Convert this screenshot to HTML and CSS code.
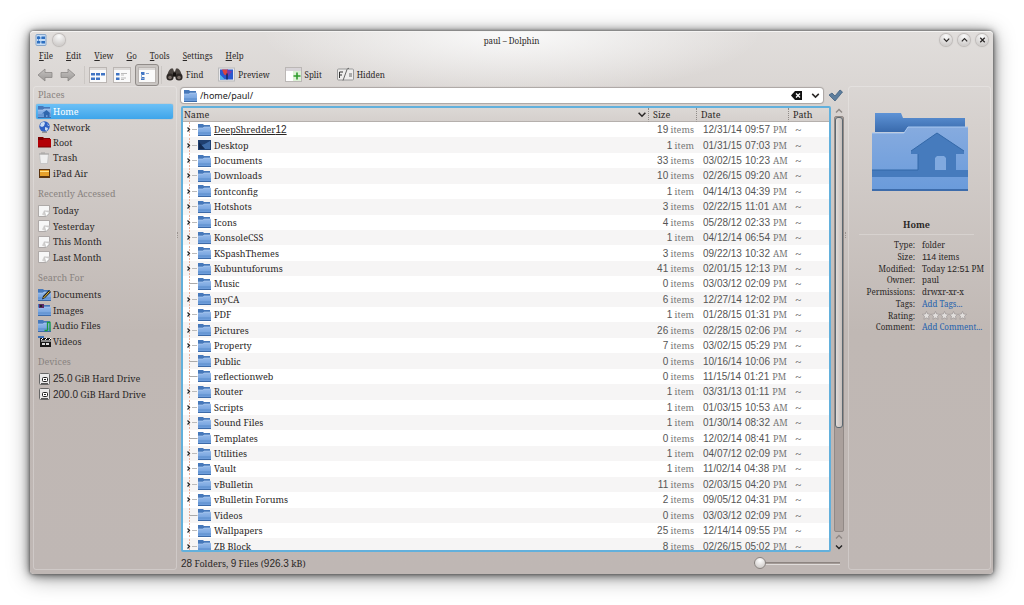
FILE: index.html
```html
<!DOCTYPE html>
<html lang="en">
<head>
<meta charset="utf-8">
<title>paul – Dolphin</title>
<link rel="stylesheet" href="styles.css">
</head>
<body>
<svg class="defs" aria-hidden="true">
  <defs>
    <linearGradient id="blue" x1="0" y1="0" x2="0" y2="1"><stop offset="0" stop-color="#94b9ea"/><stop offset="1" stop-color="#6c9cda"/></linearGradient>
    <linearGradient id="big" x1="0" y1="0" x2="0" y2="1"><stop offset="0" stop-color="#86abdf"/><stop offset="1" stop-color="#6a9bdb"/></linearGradient>
    <linearGradient id="dark" x1="0" y1="0" x2="0" y2="1"><stop offset="0" stop-color="#5e93d6"/><stop offset="1" stop-color="#396aac"/></linearGradient>
    <linearGradient id="grey" x1="0" y1="0" x2="0" y2="1"><stop offset="0" stop-color="#c5c2c0"/><stop offset="1" stop-color="#9b9896"/></linearGradient>
    <symbol id="folder" viewBox="0 0 13 12"><path d="M0 0h5l1 1h6v4H0z" fill="#4678ba"/><path d="M0 4h5l1-1h7v8H0z" fill="url(#blue)"/><path d="M0 11.500h13" stroke="#3c6aa8"/><path d="M0 9h13" stroke="#5b8ccb"/><path d="M0 4h5l1-1h7" fill="none" stroke="#b5d0f2" stroke-width=".6"/></symbol>
    <symbol id="desktop" viewBox="0 0 13 12"><path d="M0 1h13v10H0z" fill="#1f3f70"/><path d="M1 7Q6 6 12 2v8H1z" fill="#3f6ca8"/><path d="M1 3l6 7H1z" fill="#132a50"/></symbol>
    <symbol id="homef" viewBox="0 0 13 12"><use href="#folder"/><path d="M4 7.500L8.500 4l4 3.500h-1V11H9.500V9H8v2H6V7.500z" fill="#2f66ad"/></symbol>
    <symbol id="globe" viewBox="0 0 13 12"><circle cx="6.500" cy="5.500" r="5.200" fill="#2f62c4"/><path d="M3 2q3-2 4 0l-1 3-2 1-2-1zM7 6l3 1-1 3-2-1zM9 2l2 3h-1z" fill="#c9dcf3"/><path d="M4 11.200h5" stroke="#777"/></symbol>
    <symbol id="red" viewBox="0 0 13 12"><path d="M0 1h5l1 1h6v3H0z" fill="#7c0000"/><path d="M0 4h5l1-1h7v8H0z" fill="#b30006"/><path d="M0 11h13" stroke="#700"/></symbol>
    <symbol id="trash" viewBox="0 0 13 12"><path d="M1.500 2h9l-1 9.500h-7z" fill="#efefef" stroke="#bbb" stroke-width=".7"/><path d="M1 2h10M3 1h4" stroke="#a5a3a2"/></symbol>
    <symbol id="ipad" viewBox="0 0 13 12"><rect x="1" y="2" width="11" height="9" fill="#5a3410"/><rect x="2" y="3" width="9" height="6" fill="#e7a02b"/><path d="M2 4.500h9" stroke="#ffe18a"/></symbol>
    <symbol id="page" viewBox="0 0 13 12"><path d="M.5.5h11V8l-3 3.500h-8z" fill="#f7f7f7" stroke="#a19c9a" stroke-width=".8"/><path d="M4 9.500l2-4h5.500V8l-3 3.500" fill="#d2d0cf"/><path d="M6.500 6l5 1.500-3.500 4z" fill="#fff" stroke="#aaa" stroke-width=".4"/></symbol>
    <symbol id="docs" viewBox="0 0 13 12"><use href="#folder"/><path d="M4 10.500l1-3.500 6-6 2 2-6 6z" fill="#222"/><path d="M5.500 9l6-6.500" stroke="#ffd23c"/></symbol>
    <symbol id="images" viewBox="0 0 13 12"><use href="#folder"/><path d="M1 0h5v4H1z" fill="#5b2c66"/><path d="M2 1h2v2H2z" fill="#222"/></symbol>
    <symbol id="audio" viewBox="0 0 13 12"><use href="#folder"/><path d="M6.500 10.500h3M9.500 10.500V2.500h2.500V11" fill="none" stroke="#1d9a3c" stroke-width="1.300"/></symbol>
    <symbol id="video" viewBox="0 0 13 12"><path d="M0 1h6v2H0z" fill="#3d70b3"/><path d="M2 3h11v9H2z" fill="#171717"/><path d="M3 5l2-2M7 5l2-2M11 5l2-2M3 6h10" stroke="#fff"/><path d="M4 8h3v2H4zM8 8h3v2H8z" fill="#dcdcdc"/></symbol>
    <symbol id="drive" viewBox="0 0 13 12"><rect x="1.500" y=".5" width="10" height="11" rx="1" fill="#e9e9e9" stroke="#666"/><path d="M3 10.500h7" stroke="#555"/><rect x="4.500" y="4.500" width="5" height="4" rx="1" fill="#fff" stroke="#222"/><path d="M6 6h2v1H6z" fill="#222"/></symbol>
    <symbol id="star" viewBox="0 0 10 10"><path d="M5 .5l1.300 2.800 3.200.4-2.300 2.200.7 3.300L5 7.600 2.100 9.200l.7-3.300L.5 3.700l3.200-.4z" fill="#e2dfdd" stroke="#969090" stroke-width=".7"/></symbol>
    <symbol id="arrow" viewBox="0 0 16 14"><path d="M1 7l7-6v3.500h7v5H8V13z" fill="url(#grey)" stroke="#8b8886" stroke-width=".8"/></symbol>
    <symbol id="down" viewBox="0 0 10 8"><path d="M2 2.500l3 3 3-3" fill="none" stroke="currentColor" stroke-width="1.400"/></symbol>
    <symbol id="up" viewBox="0 0 10 8"><path d="M2 5.500l3-3 3 3" fill="none" stroke="currentColor" stroke-width="1.400"/></symbol>
  </defs>
</svg>

<div class="window">
  <header class="titlebar">
    <div class="title-side">
      <svg class="app-icon" viewBox="0 0 11 12"><rect x=".5" y=".5" width="10" height="11" rx="1" fill="#c5dcf5" stroke="#87a5c8"/><path d="M1.500 2.500h3v2.500h-3zM1.500 7h3v2.500h-3zM6 2.500h3.500v2.500H6zM6 7h3.500v2.500H6z" fill="#2e6fc0"/><path d="M3 2v7M3 4h5M3 8h5" stroke="#2e6fc0" stroke-width=".6"/></svg>
      <button class="orb" aria-label="On all desktops"></button>
    </div>
    <h1>paul – Dolphin</h1>
    <div class="title-side title-end">
      <button class="orb" aria-label="Minimize"><svg><use href="#down"/></svg></button>
      <button class="orb" aria-label="Maximize"><svg><use href="#up"/></svg></button>
      <button class="orb" aria-label="Close"><svg viewBox="0 0 10 8"><path d="M2.500 1.500l5 5M7.500 1.500l-5 5" stroke="currentColor" stroke-width="1.400"/></svg></button>
    </div>
  </header>

  <nav class="menubar">
    <button><u>F</u>ile</button><button><u>E</u>dit</button><button><u>V</u>iew</button><button><u>G</u>o</button><button><u>T</u>ools</button><button><u>S</u>ettings</button><button><u>H</u>elp</button>
  </nav>

  <div class="toolbar">
    <button class="nav" aria-label="Back"><svg><use href="#arrow"/></svg></button>
    <button class="nav forward" aria-label="Forward"><svg><use href="#arrow"/></svg></button>
    <span class="rule"></span>
    <button class="mode" aria-label="Icons"><svg viewBox="0 0 18 16"><rect x=".5" y=".5" width="17" height="15" fill="#fafafa" stroke="#bbb6b3"/><path d="M1 1h16v2H1z" fill="#dcd9d7"/><path d="M2 6h4v2.500H2zM7 6h4v2.500H7zM12 6h4v2.500h-4zM2 10.500h4V13H2zM7 10.500h4V13H7z" fill="#3f74c4"/></svg></button>
    <button class="mode" aria-label="Compact"><svg viewBox="0 0 18 16"><rect x=".5" y=".5" width="17" height="15" fill="#fafafa" stroke="#bbb6b3"/><path d="M1 1h16v2H1z" fill="#dcd9d7"/><path d="M3 6h3.500v2.500H3zM3 10.500h3.500V13H3z" fill="#3f74c4"/><path d="M8 6.500h6M8 8h3M8 11h5M8 12.500h3" stroke="#bbb"/></svg></button>
    <button class="mode pressed" aria-label="Details" aria-pressed="true"><svg viewBox="0 0 18 16"><rect x=".5" y=".5" width="17" height="15" fill="#fafafa" stroke="#bbb6b3"/><path d="M1 1h16v2H1z" fill="#dcd9d7"/><path d="M3 5h3.500v3H3zM3 10h3.500v3H3z" fill="#3f74c4"/><path d="M3.500 7v4.500H6M8 6.500h3" stroke="#8aa9d4" fill="none"/></svg></button>
    <span class="rule"></span>
    <button class="tool"><svg viewBox="0 0 17 14"><path d="M1 9q1-6 4-8h2l1 3h1l1-3h2q3 2 4 8z" fill="#4b4541"/><circle cx="4" cy="9.500" r="3.600" fill="#2c2724"/><circle cx="13" cy="9.500" r="3.600" fill="#2c2724"/><circle cx="4" cy="10" r="1.800" fill="#776c66"/><circle cx="13" cy="10" r="1.800" fill="#776c66"/><path d="M7 5h3v4H7z" fill="#15110f"/></svg>Find</button>
    <button class="tool"><svg viewBox="0 0 17 14"><rect x=".5" y=".5" width="16" height="13" fill="#e9e9ee" stroke="#bbb"/><path d="M2 2h13v10H2z" fill="#2b58cf"/><path d="M4 2h6l-1 6-3-1z" fill="#d9433f"/><path d="M9 2l5 2-4 5z" fill="#7c3aa8"/><path d="M9 6v6" stroke="#16275e" stroke-width="1.500"/><path d="M2 7l5 5H2z" fill="#54b4ea"/></svg>Preview</button>
    <button class="tool"><svg viewBox="0 0 17 15"><rect x=".5" y=".5" width="16" height="14" fill="#fff" stroke="#bbb7b5"/><path d="M1 1h15v3H1z" fill="#d8d4d8"/><path d="M8 4h8v10H8z" fill="#dcf1d5"/><path d="M12 5.500v7M8.500 9h7" stroke="#2f9c2d" stroke-width="1.600"/></svg>Split</button>
    <button class="tool"><svg viewBox="0 0 17 14"><rect x=".5" y="1.500" width="16" height="11" rx="1" fill="#efeeed" stroke="#999"/><path d="M2.500 10.500v-6H6M2.500 7.500H5" stroke="#333" fill="none"/><path d="M6 13l4-11q1-2 2-1M12 6.500h3M12 8.500h3" stroke="#666" fill="none"/></svg>Hidden</button>
  </div>

  <div class="workspace">
    <aside class="places">
      <h2>Places</h2>
      <ul class="five">
        <li class="selected"><svg><use href="#homef"/></svg>Home</li>
        <li><svg><use href="#globe"/></svg>Network</li>
        <li><svg><use href="#red"/></svg>Root</li>
        <li><svg><use href="#trash"/></svg>Trash</li>
        <li><svg><use href="#ipad"/></svg>iPad Air</li>
      </ul>
      <h2>Recently Accessed</h2>
      <ul class="four">
        <li><svg><use href="#page"/></svg>Today</li>
        <li><svg><use href="#page"/></svg>Yesterday</li>
        <li><svg><use href="#page"/></svg>This Month</li>
        <li><svg><use href="#page"/></svg>Last Month</li>
      </ul>
      <h2>Search For</h2>
      <ul class="four">
        <li><svg><use href="#docs"/></svg>Documents</li>
        <li><svg><use href="#images"/></svg>Images</li>
        <li><svg><use href="#audio"/></svg>Audio Files</li>
        <li><svg><use href="#video"/></svg>Videos</li>
      </ul>
      <h2>Devices</h2>
      <ul class="two">
        <li><svg><use href="#drive"/></svg><span><b class="num">25.0</b> GiB Hard Drive</span></li>
        <li><svg><use href="#drive"/></svg><span><b class="num">200.0</b> GiB Hard Drive</span></li>
      </ul>
    </aside>
    <div class="grip"></div>

    <main class="center">
      <div class="location">
        <div class="address">
          <svg class="loc-icon"><use href="#folder"/></svg>
          <input type="text" value="/home/paul/" aria-label="Location">
          <button aria-label="Clear"><svg viewBox="0 0 11 9"><path d="M0 4.500L4 0h7v9H4z" fill="#111"/><path d="M5 2.500l4 4M9 2.500l-4 4" stroke="#fff" stroke-width="1.300"/></svg></button>
          <button aria-label="History"><svg viewBox="0 0 10 8"><use href="#down"/></svg></button>
        </div>
        <button class="accept" aria-label="Accept"><svg viewBox="0 0 15 13"><path d="M1 6l3-2 3 3 5-6 2.500 2L7 12z" fill="#5d7e9d" stroke="#40607f" stroke-width=".8"/></svg></button>
      </div>

      <div class="listing">
        <div class="view">
          <table>
            <colgroup><col><col class="c-size"><col class="c-date"><col class="c-path"></colgroup>
            <thead><tr><th scope="col"><div class="sorted">Name<svg><use href="#down"/></svg></div></th><th scope="col">Size</th><th scope="col">Date</th><th scope="col">Path</th></tr></thead>
            <tbody id="files"></tbody>
          </table>
        </div>
        <div class="scrollbar">
          <button aria-label="Scroll up"><svg><use href="#up"/></svg></button>
          <div class="track"><div class="thumb"></div></div>
          <button aria-label="Page up"><svg><use href="#up"/></svg></button>
          <button class="strong" aria-label="Scroll down"><svg><use href="#down"/></svg></button>
        </div>
      </div>

      <footer class="status">
        <span><b class="num">28</b> Folders, <b class="num">9</b> Files (<b class="num">926.3</b> kB)</span>
        <input type="range" min="0" max="10" value="0" aria-label="Icon size">
      </footer>
    </main>
    <div class="grip"></div>

    <aside class="info">
      <svg class="preview" viewBox="0 0 96 80">
        <path d="M3 1h26l2 5h62v14H3z" fill="url(#dark)"/>
        <path d="M0 21h32l4-6h60v63H0z" fill="url(#big)"/>
        <path d="M0 21h32l4-6h60" fill="none" stroke="#a9c8f0"/>
        <path d="M0 58h46V42h-7v-3l26-18 27 18v3h-8v16h12v7H0z" fill="#467bbd"/>
        <path d="M39 39l26-18 27 18M0 58h46V42" fill="none" stroke="#3368a8"/>
        <path d="M63 46l2-2h7l2 2v12H63z" fill="#80a9df"/>
        <path d="M0 78h96" stroke="#3d6cab" stroke-width="2"/>
      </svg>
      <h2>Home</h2>
      <dl>
        <dt>Type:</dt><dd>folder</dd>
        <dt>Size:</dt><dd><b class="num">114</b> items</dd>
        <dt>Modified:</dt><dd>Today <b class="num">12:51</b> PM</dd>
        <dt>Owner:</dt><dd>paul</dd>
        <dt>Permissions:</dt><dd>drwxr-xr-x</dd>
        <dt>Tags:</dt><dd><a href="#tags">Add Tags...</a></dd>
        <dt>Rating:</dt><dd class="stars"><svg><use href="#star"/></svg><svg><use href="#star"/></svg><svg><use href="#star"/></svg><svg><use href="#star"/></svg><svg><use href="#star"/></svg></dd>
        <dt>Comment:</dt><dd><a href="#comment">Add Comment...</a></dd>
      </dl>
    </aside>
  </div>
</div>
<script src="files.js"></script>
</body>
</html>
```

FILE: styles.css
```css
* { box-sizing: border-box; }
body {
  margin: 0;
  padding: 31px 31px 31px 30px;
  background: #fff;
  color: #2b2827;
  font: 9px/15px "Noto Serif", "Droid Serif", "DejaVu Serif Condensed", "DejaVu Serif", serif;
}
.defs { position: absolute; width: 0; height: 0; }
button { border: 0; padding: 0; background: none; color: inherit; font: inherit; }
h1, h2, ul, dl, dd { margin: 0; padding: 0; font-size: inherit; font-weight: 400; }
ul { list-style: none; }
.num { font-family: "Liberation Sans", Arial, sans-serif; font-size: 10px; font-weight: 400; line-height: 1; }

.window {
  display: flex;
  flex-direction: column;
  height: calc(100vh - 62px);
  min-height: 440px;
  border-radius: 4px;
  border-top: 1px solid #f5f4f3;
  background:
    radial-gradient(ellipse 250px 64px at 50% 0, #fafafa, rgba(250, 250, 250, 0)),
    linear-gradient(#e1dedc, #d6d1ce 90px, #c0b8b4 300px, #bfb7b4);
  box-shadow: 0 0 3px #555, 0 1px 10px rgba(0, 0, 0, .6), 0 3px 22px rgba(0, 0, 0, .4);
}

.titlebar { display: flex; align-items: center; height: 16px; padding: 0 5px; font-size: 8px; }
.titlebar h1 { text-align: center; }
.title-side { display: flex; flex: 1; align-items: center; gap: 6px; }
.title-end { justify-content: flex-end; }
.app-icon { width: 12px; height: 12px; }
.orb {
  display: grid; place-items: center; width: 12px; height: 12px; border-radius: 50%;
  background: radial-gradient(circle at 50% 20%, #fafafa, #c4c0be); box-shadow: 0 0 1px 1px #bcb8b6;
}
.orb svg { width: 9px; height: 8px; }

.menubar { display: flex; gap: 13px; padding: 0 9px; font-size: 8px; }
.toolbar { display: flex; align-items: center; height: 23px; padding-left: 7px; font-size: 8px; }
.nav svg { display: block; width: 16px; height: 14px; }
.forward { margin-left: 7px; transform: scaleX(-1); }
.rule { width: 1px; height: 18px; margin: 0 4px 0 8px; background: #cbc7c4; }
.mode { margin-right: 6px; }
.mode svg { display: block; width: 18px; height: 16px; }
.pressed { margin: 0 -6px 0 -2px; padding: 2px; border: 1px solid #918c89; border-radius: 3px; background: #c9c5c2; }
.tool { display: flex; align-items: center; gap: 3px; margin-right: 15px; }
.tool svg { width: 17px; height: 15px; }

.workspace { display: flex; flex: 1; min-height: 0; }
.places { width: 144px; margin: 0 0 4px 3px; padding: 0 3px 0 2px; border: 1px solid rgba(255, 255, 255, .25); border-radius: 3px; }
.places h2 { padding: 5px 2px 1px; height: 22px; color: #898380; line-height: 16px; }
.places h2:first-child { padding-top: 0; height: 17px; }
.places ul { display: grid; grid-auto-rows: 1fr; }
.five { height: 77px; }
.four { height: 62px; }
.two { height: 31px; }
.places li { display: flex; align-items: center; gap: 2px; padding-left: 2px; line-height: 15px; }
.places li svg { width: 13px; height: 12px; }
.places .selected { border-radius: 2px; background: linear-gradient(#6cc0f6, #3ea5ea); color: #fff; box-shadow: 0 0 1px #2c8ac8; }
.grip { width: 3px; height: 6px; align-self: center; margin-bottom: 190px; border-left: 1px dotted #9b9490; }

.center { display: flex; flex: 1; flex-direction: column; min-width: 0; padding: 2px 0 0 1px; }
.location { display: flex; align-items: center; gap: 5px; }
.address { display: flex; flex: 1; align-items: center; gap: 8px; height: 15px; padding: 0 2px 0 3px; border-radius: 3px; background: #fff; box-shadow: 0 0 1px 1px #aaa5a2; }
.address svg { display: block; width: 11px; height: 9px; }
.address .loc-icon { width: 13px; height: 12px; }
.address input { flex: 1; min-width: 0; height: 15px; margin-left: -5px; padding: 0; border: 0; background: none; color: #222; font: 9px/15px "Noto Sans", sans-serif; }
.accept { margin-right: 2px; }
.accept svg { display: block; width: 15px; height: 13px; }

.listing { display: flex; flex: 1; min-height: 0; margin-top: 3px; gap: 2px; }
.view { flex: 1; min-width: 0; overflow: hidden; border: 2px solid #62b0dc; border-radius: 2px; background: #fff; }
table { width: 100%; height: 446px; border-spacing: 0; table-layout: fixed; }
.c-size { width: 48px; }
.c-date { width: 92px; }
.c-path { width: 41px; }
th { height: 14px; padding: 0 0 0 4px; background: linear-gradient(#dcd8d5, #d5d0cd); border-bottom: 1px solid #b5b0ad; border-left: 1px dotted #8f8a87; text-align: left; font-weight: 400; line-height: 13px; }
th:first-child { border-left: 0; padding-left: 1px; }
.sorted { display: flex; justify-content: space-between; align-items: center; }
.sorted svg { width: 12px; height: 9px; }
td { padding: 0; line-height: 15px; white-space: nowrap; }
tbody tr:nth-child(even) { background: #f6f5f5; }
.name { display: flex; align-items: center; height: 15px; }
.tree { width: 15px; height: 15px; }
.folder { width: 13px; height: 12px; margin-right: 3px; }
.size { padding-right: 2px; color: #777; text-align: right; }
.date { display: flex; gap: 3px; padding-left: 7px; }
.date, .path { color: #777; }
.size .num, .date .num { color: #555; }
.path { padding-left: 7px; font-size: 12px; }
.current { text-decoration: underline; }

.scrollbar { display: flex; flex-direction: column; width: 12px; }
.scrollbar button { height: 10px; color: #8f8986; line-height: 0; }
.scrollbar .strong { color: #222; }
.scrollbar svg { width: 10px; height: 8px; }
.track { flex: 1; margin: 0 1px; border: 1px solid #918986; border-radius: 2px; background: #aaa09c; }
.thumb { height: 75%; border: 1px solid #5c6870; border-radius: 3px; background: linear-gradient(90deg, #e0dcd9, #c5bebb); }

.status { display: flex; align-items: center; justify-content: space-between; height: 22px; padding: 0 5px 0 0; font-size: 9px; }
.status input { appearance: none; width: 86px; height: 12px; margin: 0; background: none; }
.status input::-webkit-slider-runnable-track { height: 3px; border-top: 1px solid #8d8581; border-bottom: 1px solid #e0dcda; background: #a49b97; }
.status input::-webkit-slider-thumb { appearance: none; width: 12px; height: 12px; margin-top: -6px; border: 1px solid #8a8481; border-radius: 50%; background: radial-gradient(circle at 50% 25%, #fff, #c6c1be); }

.info { width: 143px; margin: 0 2px 4px 0; padding: 25px 4px 0; border: 1px solid rgba(255, 255, 255, .25); border-radius: 3px; font-size: 8px; line-height: 11px; }
.info .num { font-size: 9px; }
.preview { display: block; width: 96px; height: 80px; margin: 0 auto; }
.info h2 { margin: 26px 12px 4px 6px; padding-bottom: 2px; border-bottom: 1px solid #d7d2cf; font-size: 9px; font-weight: 700; line-height: 14px; text-align: center; }
dl { display: grid; grid-template-columns: 62px 1fr; grid-auto-rows: 1fr; column-gap: 7px; height: 94px; white-space: nowrap; }
dt { text-align: right; }
.stars { display: flex; align-items: center; }
.stars svg { width: 9px; height: 9px; }
a { color: #1f62ae; text-decoration: none; }
```

FILE: files.js
```js
const files = [
  ["DeepShredder12", "19 items", "12/31/14 09:57 PM"],
  ["Desktop", "1 item", "01/31/15 07:03 PM"],
  ["Documents", "33 items", "03/02/15 10:23 AM"],
  ["Downloads", "10 items", "02/26/15 09:20 AM"],
  ["fontconfig", "1 item", "04/14/13 04:39 PM"],
  ["Hotshots", "3 items", "02/22/15 11:01 AM"],
  ["Icons", "4 items", "05/28/12 02:33 PM"],
  ["KonsoleCSS", "1 item", "04/12/14 06:54 PM"],
  ["KSpashThemes", "3 items", "09/22/13 10:32 AM"],
  ["Kubuntuforums", "41 items", "02/01/15 12:13 PM"],
  ["Music", "0 items", "03/03/12 02:09 PM"],
  ["myCA", "6 items", "12/27/14 12:02 PM"],
  ["PDF", "1 item", "01/28/15 01:31 PM"],
  ["Pictures", "26 items", "02/28/15 02:06 PM"],
  ["Property", "7 items", "03/02/15 05:29 PM"],
  ["Public", "0 items", "10/16/14 10:06 PM"],
  ["reflectionweb", "0 items", "11/15/14 01:21 PM"],
  ["Router", "1 item", "03/31/13 01:11 PM"],
  ["Scripts", "1 item", "01/03/15 10:53 AM"],
  ["Sound Files", "1 item", "01/30/14 08:32 AM"],
  ["Templates", "0 items", "12/02/14 08:41 PM"],
  ["Utilities", "1 item", "04/07/12 02:09 PM"],
  ["Vault", "1 item", "11/02/14 04:38 PM"],
  ["vBulletin", "11 items", "02/03/15 04:20 PM"],
  ["vBulletin Forums", "2 items", "09/05/12 04:31 PM"],
  ["Videos", "0 items", "03/03/12 02:09 PM"],
  ["Wallpapers", "25 items", "12/14/14 09:55 PM"],
  ["ZB Block", "8 items", "02/26/15 05:02 PM"]
];

const digits = text => text.replace(/\d[\d/:.]*/g, '<b class="num">$&</b>');

document.getElementById("files").innerHTML = files.map(([name, size, date], i) => {
  const leaf = size.startsWith("0 ");
  const branch = leaf
    ? '<path d="M6.500 7.500h8" stroke="#aaa"/>'
    : '<path d="M4.500 5.500l2 2-2 2" fill="none" stroke="#222" stroke-width="1.200"/><path d="M9 7.500h5" stroke="#bbb"/>';
  const icon = name === "Desktop" ? "desktop" : "folder";
  return `<tr><td><div class="name">
    <svg class="tree" viewBox="0 0 15 15"><path d="M6.500 0v15" stroke="#e9b09a" stroke-dasharray="2 1"/>${branch}</svg>
    <svg class="folder"><use href="#${icon}"/></svg><span class="${i ? "" : "current"}">${digits(name)}</span></div></td>
    <td class="size">${digits(size)}</td>
    <td><div class="date">${date.split(" ").map(p => `<span>${digits(p)}</span>`).join("")}</div></td>
    <td class="path">~</td></tr>`;
}).join("");
```
